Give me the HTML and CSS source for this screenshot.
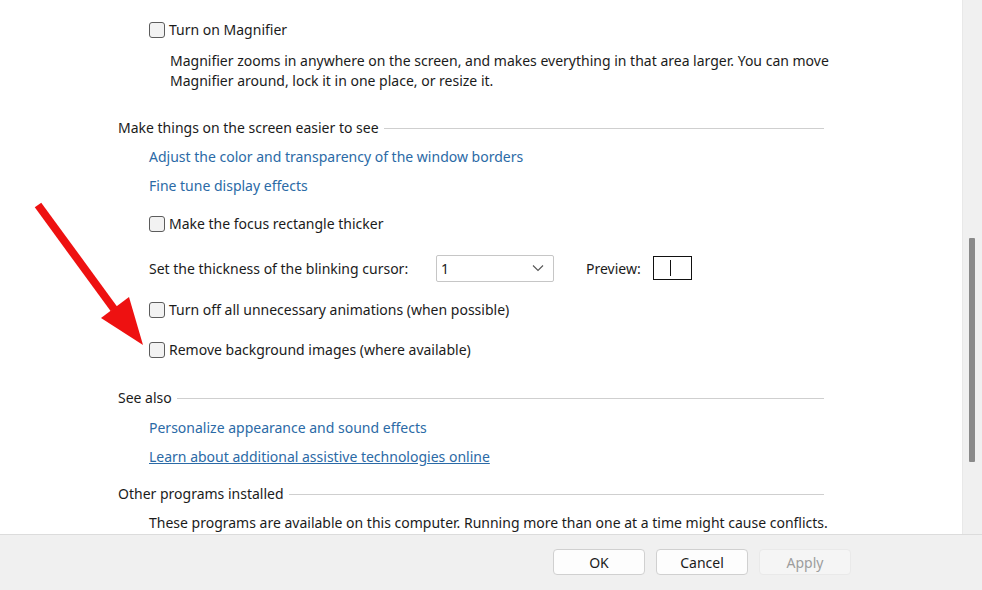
FILE: index.html
```html
<!DOCTYPE html>
<html lang="en">
<head>
    <meta charset="UTF-8">
    <title>Make the computer easier to see</title>
    <link rel="stylesheet" href="styles.css">
</head>
<body>

    <div class="window">
        <div class="main">
            <div class="panel">
                <label class="check row-first">
                    <span class="box"></span>Turn on Magnifier
                </label>
                <p class="desc">Magnifier zooms in anywhere on the screen, and makes everything in that area larger. You can move<br>Magnifier around, lock it in one place, or resize it.</p>

                <div class="section sec-first"><span>Make things on the screen easier to see</span></div>
                <a class="link gap-sm" href="#">Adjust the color and transparency of the window borders</a>
                <a class="link gap-sm" href="#">Fine tune display effects</a>

                <label class="check gap-md">
                    <span class="box"></span>Make the focus rectangle thicker
                </label>

                <div class="cursor-row">
                    <span class="cursor-label">Set the thickness of the blinking cursor:</span>
                    <div class="select">
                        <span>1</span>
                        <svg width="12" height="8" viewBox="0 0 12 8"><path d="M1 1.5 L6 6.5 L11 1.5" fill="none" stroke="#555" stroke-width="1.1"/></svg>
                    </div>
                    <span class="preview-label">Preview:</span>
                    <div class="preview"><span class="caret"></span></div>
                </div>

                <label class="check gap-md">
                    <span class="box"></span>Turn off all unnecessary animations (when possible)
                </label>
                <label class="check gap-lg">
                    <span class="box"></span>Remove background images (where available)
                </label>

                <div class="section sec-see"><span>See also</span></div>
                <a class="link gap-link" href="#">Personalize appearance and sound effects</a>
                <a class="link gap-sm underline" href="#">Learn about additional assistive technologies online</a>

                <div class="section sec-other"><span>Other programs installed</span></div>
                <p class="note">These programs are available on this computer. Running more than one at a time might cause conflicts.</p>
            </div>
            <div class="scrollbar"><div class="thumb"></div></div>
        </div>

        <div class="footer">
            <button class="btn">OK</button>
            <button class="btn">Cancel</button>
            <button class="btn" disabled>Apply</button>
        </div>

        <svg class="arrow" width="160" height="360" viewBox="0 0 160 360">
            <line x1="38" y1="205" x2="114" y2="309" stroke="#ee1111" stroke-width="8"/>
            <polygon points="101,318 129,297 143,345" fill="#ee1111"/>
        </svg>
    </div>

</body>
</html>
```

FILE: styles.css
```css
/* Base */
body {
    margin: 0;
    padding: 0;
    font-family: 'Noto Sans', 'Open Sans', sans-serif;
    font-size: 14px;
    color: #1b1b1b;
    background: #f0f0f0;
}

.window {
    position: relative;
    width: 982px;
    height: 590px;
    overflow: hidden;
}

.main {
    display: flex;
    height: 535px;
    background: #fff;
    border-bottom: 1px solid #dcdcdc;
    box-sizing: border-box;
}

.panel {
    flex: 1;
    min-width: 0;
    display: flex;
    flex-direction: column;
    align-items: flex-start;
    padding: 0 138px 0 118px;
}

.scrollbar {
    flex-shrink: 0;
    width: 20px;
    background: #f0f0f0;
    border-left: 1px solid #e8e8e8;
    box-sizing: border-box;
    padding-top: 238px;
}

.thumb {
    width: 6px;
    height: 224px;
    margin-left: 6px;
    background: #8a8a8a;
    border-radius: 1px;
}

/* Rows */
.check {
    display: flex;
    align-items: center;
    height: 20px;
    line-height: 20px;
    margin-left: 31px;
    white-space: nowrap;
}

.box {
    width: 14px;
    height: 14px;
    margin-right: 4px;
    border: 1px solid #5c5c5c;
    border-radius: 3px;
    background: #f2f2f2;
}

.row-first { margin-top: 20px; }
.gap-md { margin-top: 18px; }
.gap-lg { margin-top: 20px; }
.gap-sm { margin-top: 9px; }
.gap-link { margin-top: 10px; }

.desc {
    margin: 11px 0 0 52px;
    line-height: 20px;
    white-space: nowrap;
}

.section {
    display: flex;
    align-items: center;
    align-self: stretch;
    height: 20px;
    line-height: 20px;
}

.section::after {
    content: "";
    flex: 1;
    margin-left: 5px;
    border-top: 1px solid #cfcfcf;
}

.sec-first { margin-top: 27px; }
.sec-see { margin-top: 28px; }
.sec-other { margin-top: 17px; }

.link {
    display: block;
    height: 20px;
    line-height: 20px;
    margin-left: 31px;
    color: #2b6aa6;
    text-decoration: none;
    white-space: nowrap;
}

.link.underline {
    text-decoration: underline;
}

.note {
    margin: 9px 0 0 31px;
    line-height: 20px;
    white-space: nowrap;
}

/* Cursor thickness */
.cursor-row {
    display: flex;
    align-items: center;
    height: 28px;
    margin: 20px 0 0 31px;
}

.cursor-label {
    width: 287px;
}

.select {
    display: flex;
    align-items: center;
    justify-content: space-between;
    width: 118px;
    height: 27px;
    padding: 0 9px 0 4px;
    border: 1px solid #c6c6c6;
    border-radius: 2px;
    box-sizing: border-box;
}

.preview-label {
    margin-left: 32px;
}

.preview {
    display: flex;
    justify-content: center;
    align-items: center;
    width: 39px;
    height: 24px;
    margin-left: 12px;
    border: 1px solid #111;
    box-sizing: border-box;
}

.caret {
    width: 1px;
    height: 16px;
    background: #111;
    margin-right: 4px;
}

/* Footer */
.footer {
    display: flex;
    gap: 11px;
    padding: 14px 0 0 553px;
}

.btn {
    width: 92px;
    height: 26px;
    font-family: inherit;
    font-size: 14px;
    color: #1b1b1b;
    background: #fdfdfd;
    border: 1px solid #d0d0d0;
    border-radius: 4px;
}

.btn:disabled {
    color: #9d9d9d;
    background: #f5f5f5;
    border-color: #e9e9e9;
}

.arrow {
    position: absolute;
    left: 0;
    top: 0;
}
```
